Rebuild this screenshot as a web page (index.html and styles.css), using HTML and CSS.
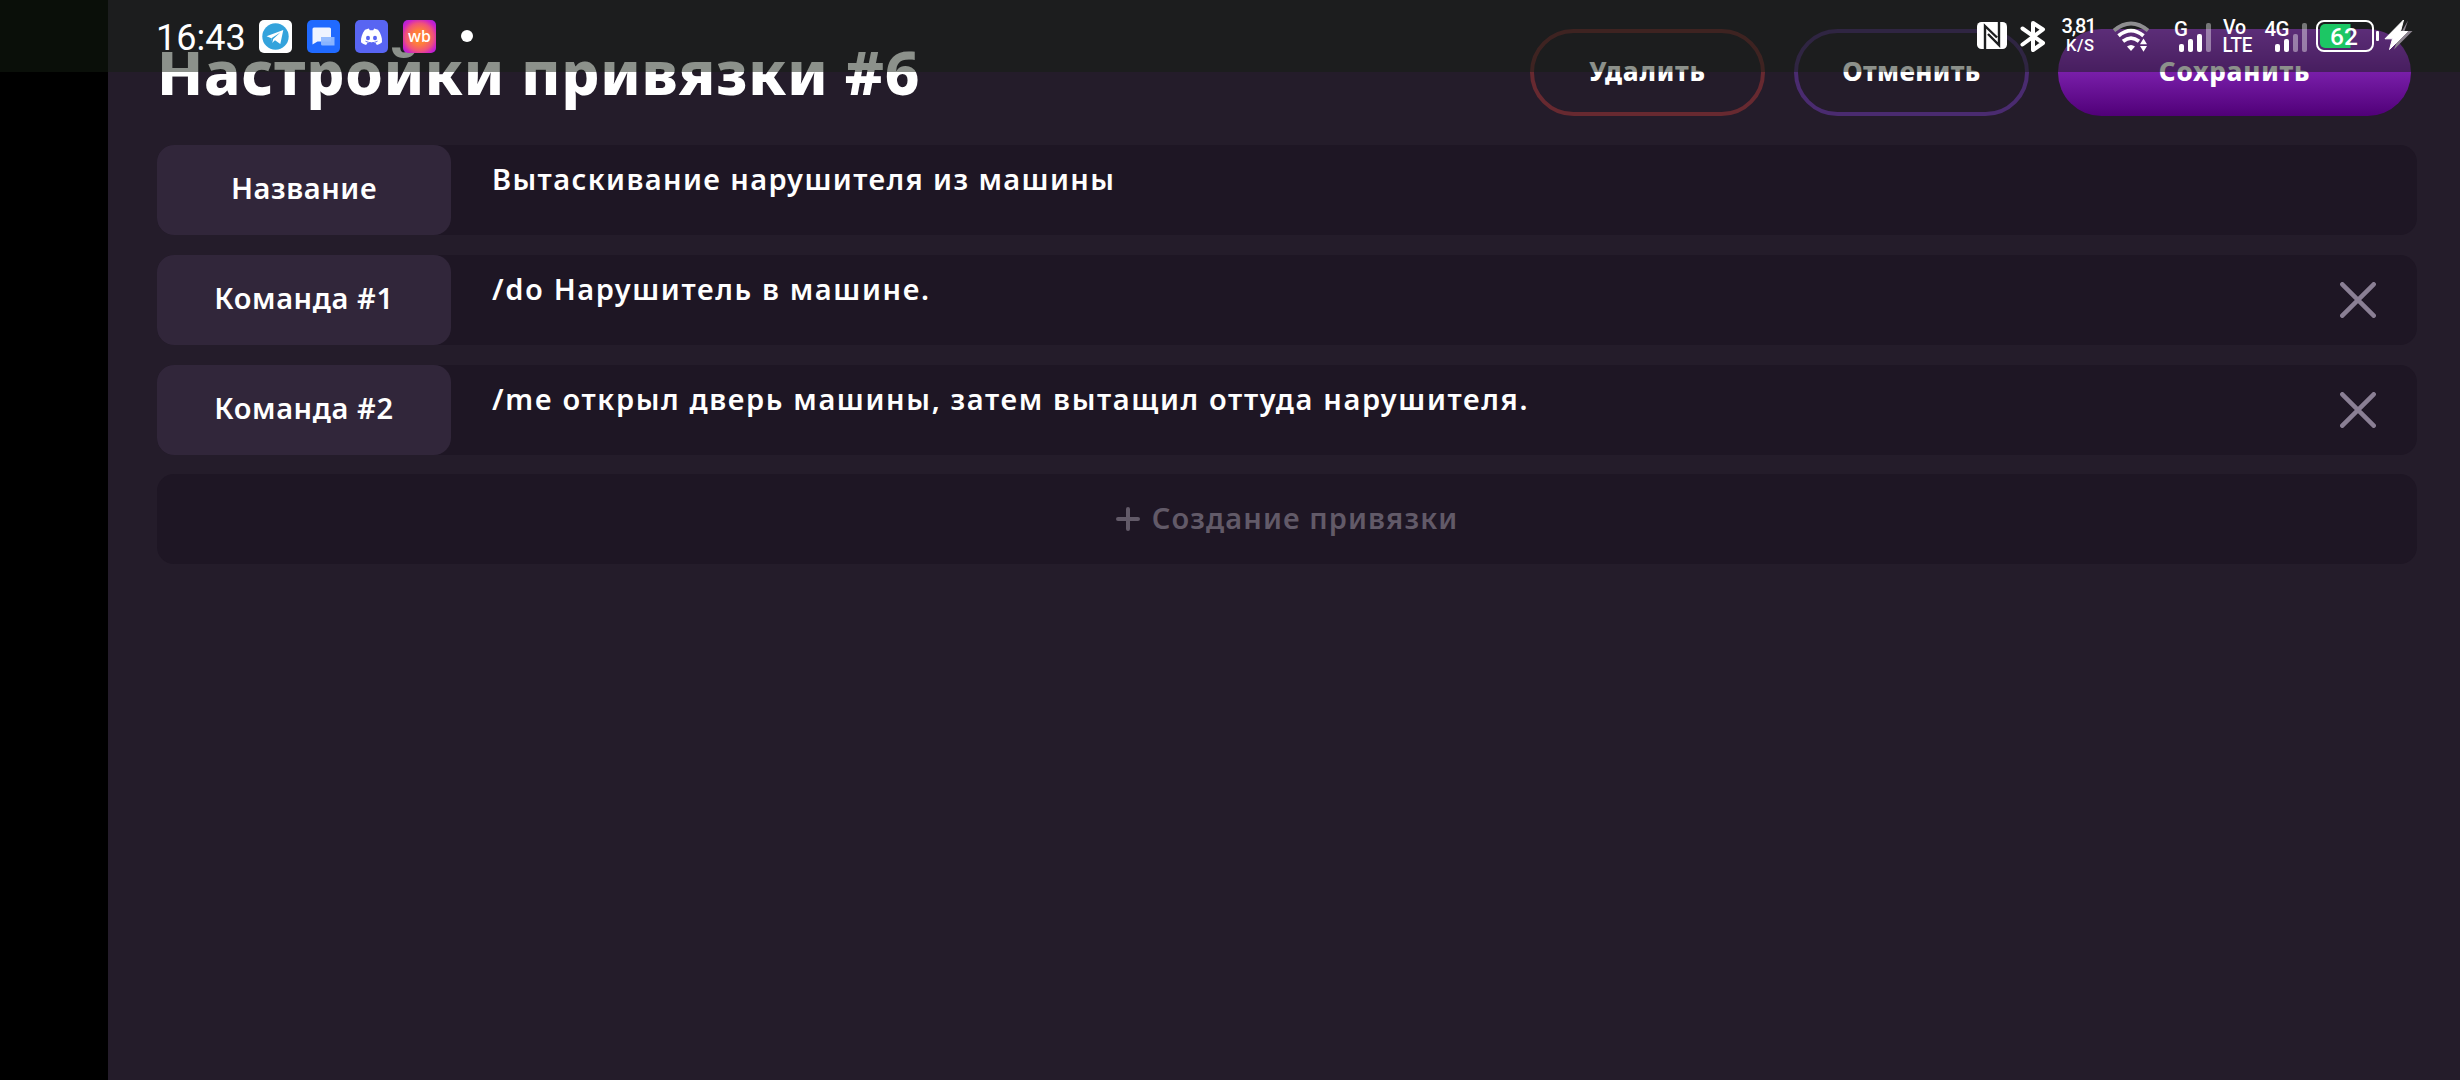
FILE: index.html
```
<!DOCTYPE html>
<html lang="ru">
<head>
  <meta charset="UTF-8" />
  <meta name="viewport" content="width=device-width, initial-scale=1" />
  <title>Настройки привязки</title>
  <link rel="stylesheet" href="styles.css">
</head>
<body>

  <main class="app">
    <header class="header">
      <h1>Настройки привязки #6</h1>
      <div class="actions">
        <button class="btn btn-delete">Удалить</button>
        <button class="btn btn-cancel">Отменить</button>
        <button class="btn btn-save">Сохранить</button>
      </div>
    </header>

    <section class="rows">
      <div class="row">
        <div class="label">Название</div>
        <div class="value name">Вытаскивание нарушителя из машины</div>
      </div>
      <div class="row">
        <div class="label">Команда #1</div>
        <div class="value">/do Нарушитель в машине.</div>
        <svg class="remove" viewBox="0 0 36 36"><path d="M2.3 2.3 33.7 33.7M33.7 2.3 2.3 33.7"/></svg>
      </div>
      <div class="row">
        <div class="label">Команда #2</div>
        <div class="value">/me открыл дверь машины, затем вытащил оттуда нарушителя.</div>
        <svg class="remove" viewBox="0 0 36 36"><path d="M2.3 2.3 33.7 33.7M33.7 2.3 2.3 33.7"/></svg>
      </div>
      <div class="row add">
        <svg class="plus" viewBox="0 0 24 24"><path d="M12 2v20M2 12h20"/></svg>
        <span>Создание привязки</span>
      </div>
    </section>
  </main>

  <!-- системная строка состояния поверх приложения -->
  <div class="statusbar">
    <div class="status-left">
      <span class="time">16:43</span>
      <svg class="app-icon" viewBox="0 0 33 33">
        <rect width="33" height="33" rx="5" fill="#fff"/>
        <circle cx="16.5" cy="16.5" r="13.2" fill="#34a3dc"/>
        <path d="M7.5 16.3 24.3 10 21.3 24 16 20.2 13.3 22.8 12.4 18.2Z" fill="#fff"/>
        <path d="M12.4 18.2 21.3 12.4 14.2 19 13.3 22.8Z" fill="#34a3dc"/>
      </svg>
      <svg class="app-icon" viewBox="0 0 33 33">
        <rect width="33" height="33" rx="5" fill="#206aff"/>
        <path d="M7 7.5h15.5a1.5 1.5 0 0 1 1.5 1.5v12.5H10.5L5.5 24.5V9A1.5 1.5 0 0 1 7 7.5Z" fill="#eef3ff"/>
        <path d="M14 17h13.5v8.500H15.5A1.5 1.5 0 0 1 14 24Z" fill="#8fb8ff" opacity=".95"/>
      </svg>
      <svg class="app-icon" viewBox="0 0 33 33">
        <rect width="33" height="33" rx="5" fill="#5865f2"/>
        <path d="M10 9.8 13.8 8.4 14.8 10.2H18.2L19.2 8.4 23 9.8C25.8 13.5 27.3 17.6 27 22.3 25.4 23.7 23.7 24.5 21.9 25L20.6 22.9H12.4L11.1 25C9.3 24.5 7.6 23.7 6 22.3 5.7 17.6 7.2 13.5 10 9.8Z" fill="#fff"/>
        <path d="M10.5 21.2C14.3 23.2 18.7 23.2 22.5 21.2" stroke="#5865f2" fill="none"/>
        <ellipse cx="13" cy="18" rx="2" ry="2.3" fill="#5865f2"/>
        <ellipse cx="20" cy="18" rx="2" ry="2.3" fill="#5865f2"/>
      </svg>
      <svg class="app-icon" viewBox="0 0 33 33">
        <defs>
          <radialGradient id="wb" cx=".5" cy=".52" r=".68">
            <stop offset=".3" stop-color="#ff8038"/>
            <stop offset=".62" stop-color="#f0527a"/>
            <stop offset=".82" stop-color="#cc22c8"/>
            <stop offset="1" stop-color="#a51fe0"/>
          </radialGradient>
        </defs>
        <rect width="33" height="33" rx="5" fill="url(#wb)"/>
        <text class="wb" x="16.5" y="21.5" text-anchor="middle">wb</text>
      </svg>
      <span class="dot"></span>
    </div>

    <div class="status-right">
      <svg class="nfc" width="30" height="72" viewBox="1977 0 30 72">
        <rect x="1977" y="22" width="30" height="27" rx="4.5" fill="#fff"/>
        <path d="M1985 49V26L1997 37.5M1999 22V45L1988 34" fill="none" stroke="#1c1e1f" stroke-width="2.4"/>
      </svg>
      <svg class="bt" width="26" height="72" viewBox="2020 0 26 72">
        <path d="M2022.5 28.5 2043 43 2033 50V23L2043 29.5 2022.5 44.5" fill="none" stroke="#fff" stroke-width="4" stroke-linejoin="round" stroke-linecap="round"/>
      </svg>
      <svg class="net" width="37" height="72" viewBox="2061 0 37 72">
        <text x="2061.5" y="33" font-size="20" textLength="35">3,81</text>
        <text x="2066" y="51" font-size="16.5" textLength="28">K/S</text>
      </svg>
      <svg class="wifi" width="38" height="72" viewBox="2112 0 38 72">
        <g fill="none" stroke="#fff" stroke-width="3.8">
          <path d="M2114 30.5Q2131 16.5 2148 30.5" stroke="#8e8e90"/>
          <path d="M2118.5 35.8Q2131 25.5 2143.5 35.8"/>
          <path d="M2123 41.2Q2131 35 2139 41.2"/>
        </g>
        <path d="M2127 46.5Q2131 43.5 2135 46.5L2131 51Z" fill="#fff"/>
        <path d="M2140 44.200 2143.5 38.500 2147 44.200ZM2140 46 2143.5 51.7 2147 46Z" fill="#fff"/>
      </svg>
      <svg class="sim1" width="38" height="72" viewBox="2174 0 38 72">
        <text x="2174" y="35.5" font-size="20.5" textLength="13">G</text>
        <g fill="#fff">
          <rect x="2179" y="44" width="5" height="8" rx="2"/>
          <rect x="2188" y="39" width="5" height="13" rx="2"/>
          <rect x="2197" y="34" width="5" height="18" rx="2"/>
          <rect x="2206" y="23" width="5" height="29" rx="2" opacity=".4"/>
        </g>
      </svg>
      <svg class="volte" width="31" height="72" viewBox="2222 0 31 72">
        <text x="2223" y="34" font-size="19.5" textLength="23">Vo</text>
        <text x="2222.5" y="52" font-size="19.5" textLength="30" lengthAdjust="spacingAndGlyphs">LTE</text>
      </svg>
      <svg class="sim2" width="44" height="72" viewBox="2264 0 44 72">
        <text x="2264.5" y="35.5" font-size="20.5" textLength="25">4G</text>
        <g fill="#fff">
          <rect x="2275" y="44" width="5" height="8" rx="2"/>
          <rect x="2284" y="39" width="5" height="13" rx="2"/>
          <rect x="2293" y="34" width="5" height="18" rx="2" opacity=".4"/>
          <rect x="2302" y="23" width="5" height="29" rx="2" opacity=".4"/>
        </g>
      </svg>
      <svg class="battery" width="65" height="72" viewBox="2315 0 65 72">
        <rect x="2317" y="21" width="56" height="30" rx="7" fill="none" stroke="#fff" stroke-width="2"/>
        <path d="M2325 24h25.5v24H2325a5 5 0 0 1-5-5V29a5 5 0 0 1 5-5Z" fill="#1cc764"/>
        <rect x="2376" y="31" width="3" height="10" rx="1" fill="#fff"/>
        <text x="2344" y="45" font-size="24.5" text-anchor="middle">62</text>
      </svg>
      <svg class="bolt" width="29" height="72" viewBox="2384 0 29 72">
        <path d="M2408 20.5 2404.5 31H2412.5L2394 49.5 2398 38Z" fill="#8d8590"/>
        <path d="M2403.5 20 2385 38.8H2392.5L2389.5 49.5 2407.5 31.5H2400.5Z" fill="#fff" stroke="#fff" stroke-linejoin="round"/>
      </svg>
    </div>
  </div>

</body>
</html>
```
FILE: styles.css
```
* { margin:0; padding:0; box-sizing:border-box; }
body { background:#000; color:#fff; font-family:'Noto Sans','Liberation Sans',sans-serif; padding-left:108px; overflow:hidden; }
.app { height:1080px; background:#241c2a; padding:29px 43px 0 49px; }

.header { display:flex; align-items:center; justify-content:space-between; height:87px; padding-right:6px; margin-bottom:29px; }
h1 { font-size:60px; line-height:87px; font-weight:800; letter-spacing:.8px; white-space:nowrap; }
.actions { display:flex; gap:29px; }
.btn { width:235px; height:87px; padding-bottom:4px; border:4px solid transparent; border-radius:44px; background:none; color:#fff; font-family:inherit; font-size:26px; font-weight:800; letter-spacing:.8px; }
.btn-delete { border-color:#672930; }
.btn-cancel { border-color:#4a2b70; letter-spacing:.4px; }
.btn-save { width:353px; border:none; background:linear-gradient(#a13cda,#500078); }

.rows { display:flex; flex-direction:column; gap:20px; }
.row { display:flex; align-items:center; height:90px; border-radius:17px; background:#1e1624; font-size:29px; font-weight:600; }
.label { display:flex; align-items:center; justify-content:center; width:294px; height:90px; padding-bottom:5px; border-radius:17px; background:#31263a; letter-spacing:.6px; }
.value { flex:1; padding:0 0 23px 41px; letter-spacing:1.63px; white-space:nowrap; }
.value.name { letter-spacing:1.4px; }
.remove { width:36px; height:36px; margin-right:41px; fill:none; stroke:#8a7f94; stroke-width:4.5; stroke-linecap:round; }
.add { justify-content:center; gap:12px; margin-top:-1px; color:#625a68; letter-spacing:1.1px; }
.add span { padding-bottom:4px; }
.plus { width:24px; height:24px; fill:none; stroke:#625a68; stroke-width:4; stroke-linecap:round; }

.statusbar { position:absolute; top:0; left:0; width:2460px; height:72px; padding:0 47px 0 156px; display:flex; justify-content:space-between; background:rgba(20,31,18,.49); font-family:Roboto,sans-serif; }
.statusbar svg { display:block; }
.status-left { display:flex; align-items:center; height:72px; }
.time { width:87px; margin-right:16px; padding-top:3px; font-size:36px; line-height:1; }
.app-icon { width:33px; height:33px; margin-right:15px; }
.wb { font-family:'Noto Sans',sans-serif; font-size:16px; font-weight:500; fill:#fff; }
.dot { width:12px; height:12px; margin-left:10px; border-radius:50%; background:#fff; }
.status-right { display:flex; }
.status-right text { fill:#fff; font-weight:500; }
.bt { margin-left:13px; }
.net { margin-left:15px; }
.wifi { margin-left:14px; }
.sim1 { margin-left:24px; }
.volte { margin-left:10px; }
.sim2 { margin-left:11px; }
.battery { margin-left:7px; }
.bolt { margin-left:4px; }
```
